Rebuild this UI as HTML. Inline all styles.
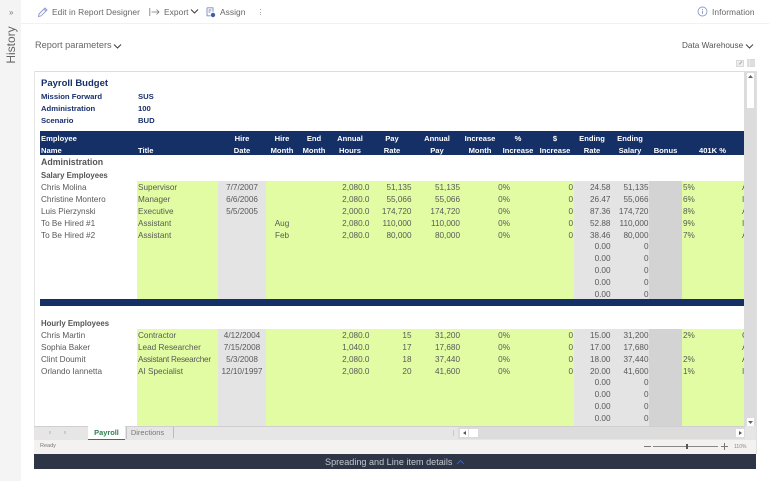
<!DOCTYPE html>
<html><head><meta charset="utf-8">
<style>
html,body{margin:0;padding:0;width:769px;height:481px;overflow:hidden;background:#fff}
body{position:relative;font-family:"Liberation Sans",sans-serif;color:#555}
div,span,svg{position:absolute}
#all{left:0;top:0;width:769px;height:481px;overflow:hidden;filter:blur(.35px)}
.top{font-size:8.400px;color:#666;white-space:nowrap;letter-spacing:.06px;line-height:10px}
.b{position:absolute;background:#e1fca3}
.g{position:absolute;background:#e4e4e4}
.r{left:0;width:769px;height:12px;font-size:8.200px;line-height:12px;color:#595959;white-space:nowrap}
.r span{top:0}
.h span{color:#fff;font-weight:bold;font-size:7.600px;line-height:12px;white-space:nowrap}
.nv{color:#17306b;font-weight:bold;font-size:7.700px;line-height:12px;white-space:nowrap}
.n{left:41px}.t{left:138px}
.d{left:218px;width:48px;text-align:center}
.hm{left:266px;width:32px;text-align:center}
.hr{right:399.500px}.p{right:357.500px}.a{right:309px}.pc{right:259px}.i{right:196px}
.er{right:158.500px}.es{right:120.500px}.k{left:683px}
.x{left:742px;width:1.500px;overflow:hidden}
</style></head><body><div id="all">

<div style="left:0;top:0;width:21px;height:481px;background:#f4f4f4"></div>
<div class="top" style="left:9px;top:8px;font-size:8px;color:#777">»</div>
<div style="left:11px;top:45px;width:0;height:0"><span style="left:-24px;top:-7px;width:48px;text-align:center;font-size:12px;line-height:14px;color:#666;transform:rotate(-90deg);white-space:nowrap">History</span></div>
<div style="left:21px;top:23px;width:748px;height:1px;background:#f1f1f1"></div>

<svg style="left:37px;top:6px" width="11" height="12" viewBox="0 0 11 12"><path d="M1.500 10.500l.6-2.600L8 2l2 2-5.900 5.900zM7 3l2 2" fill="none" stroke="#8a96c8" stroke-width=".9"/></svg>
<div class="top" style="left:52px;top:7px">Edit in Report Designer</div>
<svg style="left:149px;top:7px" width="11" height="10" viewBox="0 0 11 10"><path d="M.8 1v8M2.500 5h7.500M7.500 2.500L10 5 7.500 7.500" fill="none" stroke="#777" stroke-width=".8"/></svg>
<div class="top" style="left:164px;top:7px">Export</div>
<svg style="left:190px;top:8px" width="9" height="7" viewBox="0 0 9 7"><path d="M1 1.500l3.500 3.500L8 1.500" fill="none" stroke="#444" stroke-width="1.100"/></svg>
<svg style="left:206px;top:7px" width="10" height="11" viewBox="0 0 10 11"><path d="M1 .8h6v4M1 .8v8h3.500M2.500 3h3M2.500 5h2" fill="none" stroke="#7d89bd" stroke-width=".9"/><circle cx="7" cy="8" r="2.200" fill="#3f5fa8"/></svg>
<div class="top" style="left:220px;top:7px">Assign</div>
<div style="left:259.500px;top:9px;width:1.200px;height:1.200px;background:#aaa"></div>
<div style="left:259.500px;top:11.500px;width:1.200px;height:1.200px;background:#aaa"></div>
<div style="left:259.500px;top:14px;width:1.200px;height:1.200px;background:#aaa"></div>

<svg style="left:697px;top:6px" width="11" height="11" viewBox="0 0 11 11"><circle cx="5.500" cy="5.500" r="4.500" fill="none" stroke="#8a9bd0" stroke-width=".9"/><path d="M5.500 3v.9M5.500 4.800v3" stroke="#7d8fc8" stroke-width=".9"/></svg>
<div class="top" style="left:712px;top:7px">Information</div>

<div style="left:35px;top:39.500px;font-size:9.200px;line-height:11px;color:#666;white-space:nowrap">Report parameters</div>
<svg style="left:113px;top:43px" width="9" height="7" viewBox="0 0 9 7"><path d="M1 1.500l3.500 3.500L8 1.500" fill="none" stroke="#444" stroke-width="1.100"/></svg>
<div class="top" style="left:682px;top:41px;color:#555;font-size:8.200px;letter-spacing:0">Data Warehouse</div>
<svg style="left:745px;top:43px" width="9" height="7" viewBox="0 0 9 7"><path d="M1 1.500l3.500 3.500L8 1.500" fill="none" stroke="#444" stroke-width="1"/></svg>

<svg style="left:736px;top:60px" width="8" height="7" viewBox="0 0 8 7"><rect x=".5" y=".5" width="7" height="6" fill="#eee" stroke="#ccc" stroke-width=".7"/><path d="M3 4.500L6 1.500" stroke="#aaa"/></svg>
<svg style="left:747px;top:59px" width="8" height="8" viewBox="0 0 8 8"><rect width="8" height="8" fill="#d8d8d8"/><path d="M2.500 0v8M0 2h8M0 4h8M0 6h8" stroke="#f2f2f2" stroke-width=".6"/></svg>

<div style="left:34px;top:71px;width:722px;height:1px;background:#ddd"></div>
<div style="left:33.500px;top:71px;width:1px;height:383px;background:#e6e6e6"></div>
<div style="left:755.500px;top:71px;width:1px;height:383px;background:#e0e0e0"></div>

<div style="left:41px;top:77px;font-size:9.500px;line-height:13px;font-weight:bold;color:#17306b;white-space:nowrap">Payroll Budget</div>
<div class="nv" style="left:41px;top:91px">Mission Forward</div><div class="nv" style="left:138px;top:91px">SUS</div>
<div class="nv" style="left:41px;top:103px">Administration</div><div class="nv" style="left:138px;top:103px">100</div>
<div class="nv" style="left:41px;top:115px">Scenario</div><div class="nv" style="left:138px;top:115px">BUD</div>

<!-- header -->
<div style="left:40px;top:131px;width:703.500px;height:24px;background:#152f67"></div>
<div class="r h" style="top:133px">
<span class="n">Employee</span>
<span class="d">Hire</span><span class="hm">Hire</span><span style="left:298px;width:32px;text-align:center">End</span>
<span style="left:330px;width:40px;text-align:center">Annual</span>
<span style="left:373px;width:38px;text-align:center">Pay</span>
<span style="left:417px;width:40px;text-align:center">Annual</span>
<span style="left:460px;width:40px;text-align:center">Increase</span>
<span style="left:498px;width:40px;text-align:center">%</span>
<span style="left:535px;width:40px;text-align:center">$</span>
<span style="left:573px;width:38px;text-align:center">Ending</span>
<span style="left:611px;width:38px;text-align:center">Ending</span>
</div>
<div class="r h" style="top:145px">
<span class="n">Name</span><span class="t">Title</span>
<span class="d">Date</span><span class="hm">Month</span><span style="left:298px;width:32px;text-align:center">Month</span>
<span style="left:330px;width:40px;text-align:center">Hours</span>
<span style="left:373px;width:38px;text-align:center">Rate</span>
<span style="left:417px;width:40px;text-align:center">Pay</span>
<span style="left:460px;width:40px;text-align:center">Month</span>
<span style="left:498px;width:40px;text-align:center">Increase</span>
<span style="left:535px;width:40px;text-align:center">Increase</span>
<span style="left:573px;width:38px;text-align:center">Rate</span>
<span style="left:611px;width:38px;text-align:center">Salary</span>
<span style="left:649px;width:33px;text-align:center">Bonus</span>
<span style="left:690px;width:45px;text-align:center">401K %</span>
</div>

<div style="left:41px;top:156px;font-size:8.800px;line-height:12px;font-weight:bold;color:#555">Administration</div>
<div style="left:41px;top:169.500px;font-size:7.800px;line-height:12px;font-weight:bold;color:#555">Salary Employees</div>

<!-- fills block 1 -->
<div class="b" style="left:137px;top:181px;width:81px;height:118px"></div>
<div class="g" style="left:218px;top:181px;width:48px;height:118px"></div>
<div class="b" style="left:266px;top:181px;width:307.500px;height:118px"></div>
<div class="g" style="left:573.500px;top:181px;width:75.500px;height:118px"></div>
<div class="g" style="left:649px;top:181px;width:33px;height:118px;background:#d3d3d3"></div>
<div class="b" style="left:682px;top:181px;width:61.500px;height:118px"></div>
<div style="left:40px;top:299px;width:703.500px;height:6.500px;background:#152f67"></div>

<div class="r" style="top:182px"><span class="n">Chris Molina</span><span class="t">Supervisor</span><span class="d">7/7/2007</span><span class="hr">2,080.0</span><span class="p">51,135</span><span class="a">51,135</span><span class="pc">0%</span><span class="i">0</span><span class="er">24.58</span><span class="es">51,135</span><span class="k">5%</span><span class="x">A</span></div>
<div class="r" style="top:194px"><span class="n">Christine Montero</span><span class="t">Manager</span><span class="d">6/6/2006</span><span class="hr">2,080.0</span><span class="p">55,066</span><span class="a">55,066</span><span class="pc">0%</span><span class="i">0</span><span class="er">26.47</span><span class="es">55,066</span><span class="k">6%</span><span class="x">I</span></div>
<div class="r" style="top:206px"><span class="n">Luis Pierzynski</span><span class="t">Executive</span><span class="d">5/5/2005</span><span class="hr">2,000.0</span><span class="p">174,720</span><span class="a">174,720</span><span class="pc">0%</span><span class="i">0</span><span class="er">87.36</span><span class="es">174,720</span><span class="k">8%</span><span class="x">A</span></div>
<div class="r" style="top:218px"><span class="n">To Be Hired #1</span><span class="t">Assistant</span><span class="hm">Aug</span><span class="hr">2,080.0</span><span class="p">110,000</span><span class="a">110,000</span><span class="pc">0%</span><span class="i">0</span><span class="er">52.88</span><span class="es">110,000</span><span class="k">9%</span><span class="x">I</span></div>
<div class="r" style="top:230px"><span class="n">To Be Hired #2</span><span class="t">Assistant</span><span class="hm">Feb</span><span class="hr">2,080.0</span><span class="p">80,000</span><span class="a">80,000</span><span class="pc">0%</span><span class="i">0</span><span class="er">38.46</span><span class="es">80,000</span><span class="k">7%</span><span class="x">A</span></div>
<div class="r" style="top:241px"><span class="er">0.00</span><span class="es">0</span></div>
<div class="r" style="top:253px"><span class="er">0.00</span><span class="es">0</span></div>
<div class="r" style="top:265px"><span class="er">0.00</span><span class="es">0</span></div>
<div class="r" style="top:277px"><span class="er">0.00</span><span class="es">0</span></div>
<div class="r" style="top:289px"><span class="er">0.00</span><span class="es">0</span></div>

<div style="left:41px;top:318px;font-size:7.800px;line-height:12px;font-weight:bold;color:#555">Hourly Employees</div>

<!-- fills block 2 -->
<div class="b" style="left:137px;top:329px;width:81px;height:97px"></div>
<div class="g" style="left:218px;top:329px;width:48px;height:97px"></div>
<div class="b" style="left:266px;top:329px;width:307.500px;height:97px"></div>
<div class="g" style="left:573.500px;top:329px;width:75.500px;height:97px"></div>
<div class="g" style="left:649px;top:329px;width:33px;height:97px;background:#d3d3d3"></div>
<div class="b" style="left:682px;top:329px;width:61.500px;height:97px"></div>

<div class="r" style="top:330px"><span class="n">Chris Martin</span><span class="t">Contractor</span><span class="d">4/12/2004</span><span class="hr">2,080.0</span><span class="p">15</span><span class="a">31,200</span><span class="pc">0%</span><span class="i">0</span><span class="er">15.00</span><span class="es">31,200</span><span class="k">2%</span><span class="x">C</span></div>
<div class="r" style="top:342px"><span class="n">Sophia Baker</span><span class="t">Lead Researcher</span><span class="d">7/15/2008</span><span class="hr">1,040.0</span><span class="p">17</span><span class="a">17,680</span><span class="pc">0%</span><span class="i">0</span><span class="er">17.00</span><span class="es">17,680</span><span class="x">A</span></div>
<div class="r" style="top:354px"><span class="n">Clint Doumit</span><span class="t" style="letter-spacing:-.25px">Assistant Researcher</span><span class="d">5/3/2008</span><span class="hr">2,080.0</span><span class="p">18</span><span class="a">37,440</span><span class="pc">0%</span><span class="i">0</span><span class="er">18.00</span><span class="es">37,440</span><span class="k">2%</span><span class="x">A</span></div>
<div class="r" style="top:366px"><span class="n">Orlando Iannetta</span><span class="t">AI Specialist</span><span class="d">12/10/1997</span><span class="hr">2,080.0</span><span class="p">20</span><span class="a">41,600</span><span class="pc">0%</span><span class="i">0</span><span class="er">20.00</span><span class="es">41,600</span><span class="k">1%</span><span class="x">I</span></div>
<div class="r" style="top:377px"><span class="er">0.00</span><span class="es">0</span></div>
<div class="r" style="top:389px"><span class="er">0.00</span><span class="es">0</span></div>
<div class="r" style="top:401px"><span class="er">0.00</span><span class="es">0</span></div>
<div class="r" style="top:413px"><span class="er">0.00</span><span class="es">0</span></div>

<!-- vertical scrollbar -->
<div style="left:744px;top:72px;width:11.500px;height:354px;background:#dcdcdc"></div>
<div style="left:746.500px;top:73px;width:7.500px;height:7.500px;background:#fff"></div>
<svg style="left:748px;top:75px" width="5" height="3"><path d="M0 3L2.500 0 5 3z" fill="#666"/></svg>
<div style="left:746.500px;top:81px;width:7.500px;height:27px;background:#fff"></div>
<div style="left:746.500px;top:418px;width:7.500px;height:7.500px;background:#fff"></div>
<svg style="left:748px;top:421px" width="5" height="3"><path d="M0 0L2.500 3 5 0z" fill="#666"/></svg>

<!-- tabs -->
<div style="left:34px;top:426px;width:722px;height:14px;background:#e6e6e6"></div>
<div style="left:34px;top:425.500px;width:711px;height:1px;background:#cfcfcf"></div>
<div style="left:458px;top:427px;width:287px;height:12px;background:#dcdcdc"></div>
<div style="left:460px;top:429px;width:8px;height:8px;background:#fff"></div>
<svg style="left:462.500px;top:431px" width="3" height="4"><path d="M3 0L0 2 3 4z" fill="#555"/></svg>
<div style="left:469px;top:429px;width:9px;height:8px;background:#fff"></div>
<div style="left:736px;top:429px;width:8px;height:8px;background:#fff"></div>
<svg style="left:739px;top:431px" width="3" height="4"><path d="M0 0L3 2 0 4z" fill="#555"/></svg>
<div style="left:452.500px;top:430px;width:1px;height:6px;background:#c8c8c8"></div>
<div style="left:49px;top:431px;width:2px;height:3px;background:#ccc"></div>
<div style="left:64px;top:431px;width:2px;height:3px;background:#ccc"></div>
<div style="left:88px;top:426px;width:37px;height:13px;background:#fff;border-bottom:1px solid #2f7d4f"></div>
<div style="left:88px;top:427px;width:37px;text-align:center;font-size:7.400px;line-height:12px;font-weight:bold;color:#2f7d4f">Payroll</div>
<div style="left:125.500px;top:427px;width:1px;height:12px;background:#c4c4c4"></div>
<div style="left:126px;top:427px;width:43px;text-align:center;font-size:7.500px;line-height:11px;color:#777">Directions</div>
<div style="left:173px;top:427px;width:1px;height:11px;background:#bbb"></div>

<!-- status -->
<div style="left:34px;top:440px;width:722px;height:13.500px;background:#f3f2f1"></div>
<div style="left:40px;top:442px;font-size:5.500px;line-height:9px;color:#777">Ready</div>
<div style="left:643.500px;top:446px;width:7px;height:1px;background:#777"></div>
<div style="left:653px;top:446px;width:65px;height:1px;background:#888"></div>
<div style="left:686px;top:444px;width:2px;height:5px;background:#555"></div>
<div style="left:721px;top:446px;width:7px;height:1px;background:#777"></div>
<div style="left:724px;top:443px;width:1px;height:7px;background:#777"></div>
<div style="left:734px;top:442.500px;font-size:5px;line-height:9px;color:#888">110%</div>

<!-- details bar -->
<div style="left:34px;top:453.500px;width:722px;height:15px;background:#2d3546"></div>
<div style="left:325px;top:456px;font-size:9.100px;line-height:12px;color:#c3c7cf;white-space:nowrap">Spreading and Line item details</div>
<svg style="left:456px;top:459px" width="9" height="6" viewBox="0 0 9 6"><path d="M1 5l3.500-3.500L8 5" fill="none" stroke="#3f5fb0" stroke-width="1"/></svg>

</div></body></html>
